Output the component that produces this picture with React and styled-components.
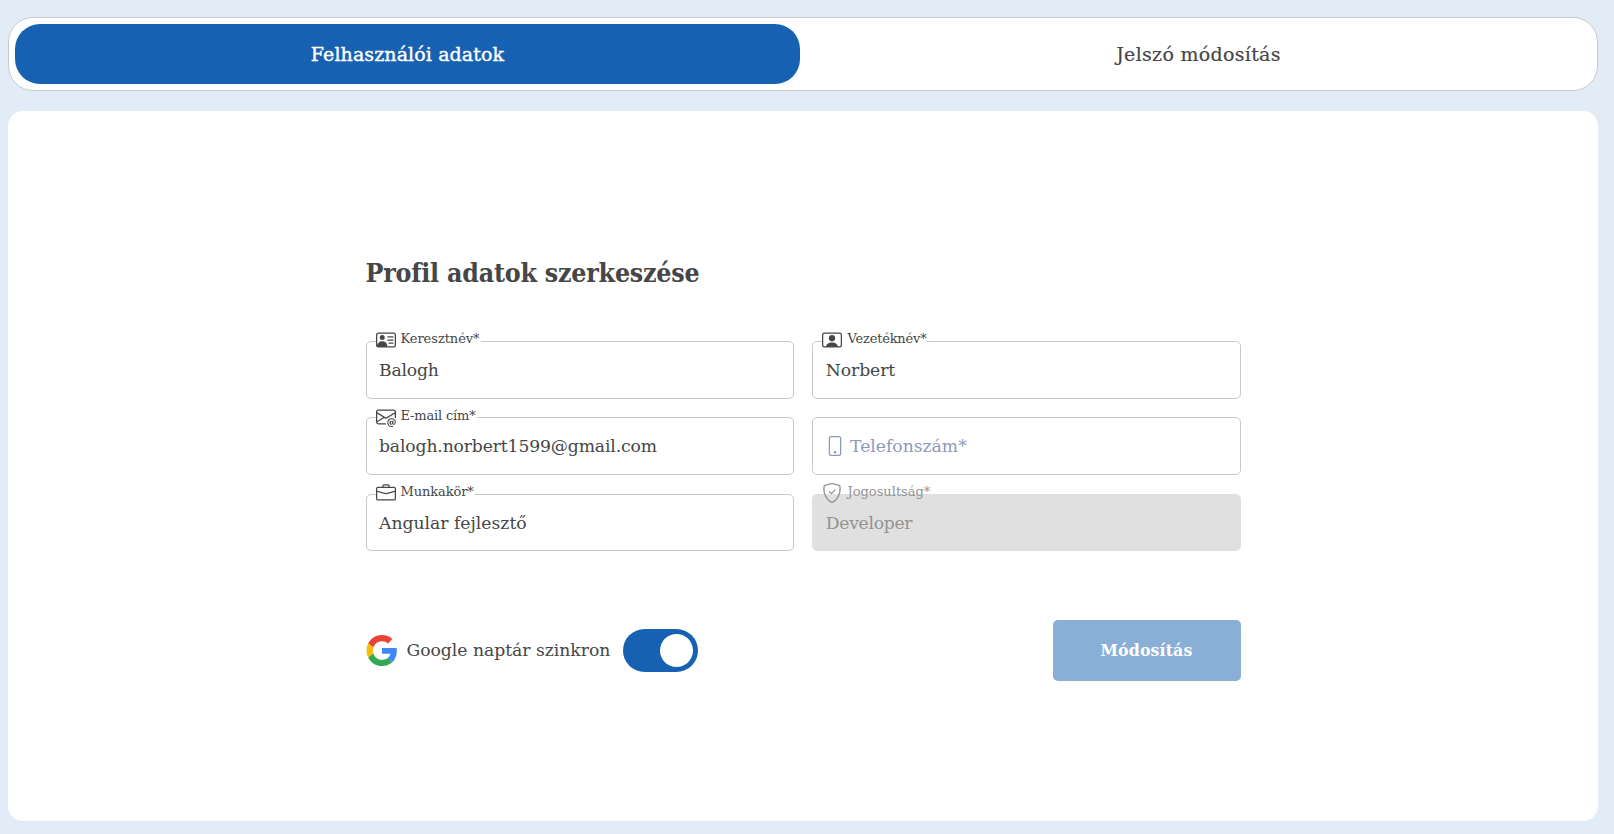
import React from 'react';
import styled, { createGlobalStyle, css } from 'styled-components';
import {
  BsPersonVcard,
  BsPersonVideo,
  BsEnvelopeAt,
  BsBriefcase,
  BsPhone,
  BsShieldCheck,
} from 'react-icons/bs';

const Global = createGlobalStyle`
  * { box-sizing: border-box; }
  body {
    margin: 0;
    background: #e1ecf6;
    color: #464646;
    font-family: "DejaVu Serif", serif;
  }
`;

const Page = styled.main`
  height: 834px;
  padding: 17px 16px 13px 8px;
  display: flex;
  flex-direction: column;
  gap: 20px;
  overflow: hidden;
`;

const Tabs = styled.nav`
  flex: none;
  display: flex;
  gap: 6px;
  height: 74px;
  padding: 6px;
  background: #fff;
  border: 1px solid #c9c9c9;
  border-radius: 25px;
`;

const Tab = styled.button`
  flex: 1;
  border: 0;
  border-radius: 25px;
  padding: 0 0 1px;
  font: 400 19px "DejaVu Serif", serif;
  letter-spacing: ${(p) => p.$spacing}px;
  color: ${(p) => (p.$active ? '#fff' : '#464646')};
  background: ${(p) => (p.$active ? '#1761b2' : 'transparent')};
  -webkit-text-stroke: ${(p) => (p.$active ? 0.4 : 0.2)}px currentColor;
`;

const Panel = styled.section`
  flex: 1;
  display: flex;
  justify-content: center;
  align-items: flex-start;
  background: #fff;
  border-radius: 15px;
  padding-top: 144px;
`;

const Form = styled.form`
  width: 875px;
`;

const Title = styled.h1`
  margin: 0 0 50px;
  font: 700 26.5px/36px "DejaVu Serif Condensed", "DejaVu Serif", serif;
  letter-spacing: -0.22px;
`;

const Fields = styled.div`
  display: grid;
  grid-template-columns: 428px 429px;
  grid-template-rows: 58px 58px 57px;
  column-gap: 18px;
  row-gap: 18.4px;
`;

const Box = styled.div`
  position: relative;
  padding: 18px 12.5px 0 ${(p) => (p.$right ? 13.3 : 12.5)}px;
  border: 1px solid #c9c9c9;
  border-radius: 5px;
  ${(p) =>
    p.$disabled &&
    css`
      color: #929292;
      background: #e0e0e0;
      border-color: #e0e0e0;
    `}
`;

const FloatLabel = styled.label`
  position: absolute;
  top: -11.6px;
  left: 9.5px;
  height: 20px;
  display: flex;
  align-items: center;
  gap: ${(p) => p.$gap}px;
  padding-right: 1px;
  background: ${(p) => (p.$disabled ? 'transparent' : '#fff')};
  svg { width: 20px; height: 20px; }
`;

const LabelText = styled.span`
  margin-top: -2px;
  font-size: 13px;
  line-height: 16px;
  white-space: nowrap;
  letter-spacing: ${(p) => p.$spacing}px;
`;

const Value = styled.div`
  font-size: 17.2px;
  line-height: 20px;
  white-space: nowrap;
  letter-spacing: ${(p) => p.$spacing}px;
`;

const Placeholder = styled(Value)`
  display: flex;
  align-items: center;
  gap: 5px;
  color: #8f99ba;
  svg { width: 20px; height: 20px; }
`;

const Footer = styled.div`
  display: flex;
  align-items: center;
  justify-content: space-between;
  margin-top: 69px;
`;

const Sync = styled.div`
  display: flex;
  align-items: center;
`;

const SyncText = styled.span`
  margin: 0 12px 0 10px;
  width: 204px;
  white-space: nowrap;
  font-size: 17.2px;
  letter-spacing: -0.02px;
`;

const Switch = styled.span`
  display: flex;
  justify-content: flex-end;
  align-items: center;
  width: 75px;
  height: 43px;
  padding: 0 5px;
  border-radius: 22px;
  background: #1761b2;
`;

const Knob = styled.span`
  width: 33px;
  height: 33px;
  border-radius: 50%;
  background: #fff;
`;

const Submit = styled.button`
  width: 188px;
  height: 61px;
  padding: 0 0 1px;
  border: 0;
  border-radius: 5px;
  background: #8aafd7;
  color: #fff;
  font: 700 17.5px "DejaVu Serif Condensed", "DejaVu Serif", serif;
  letter-spacing: 0.15px;
`;

const GoogleLogo = () => (
  <svg width="31" height="31" viewBox="-0.8 0 48 48" aria-hidden="true">
    <path fill="#EA4335" d="M24 9.5c3.54 0 6.71 1.22 9.21 3.6l6.85-6.85C35.9 2.38 30.47 0 24 0 14.62 0 6.51 5.38 2.56 13.22l7.98 6.19C12.43 13.72 17.74 9.5 24 9.5z" />
    <path fill="#4285F4" d="M46.98 24.55c0-1.57-.15-3.09-.38-4.55H24v9.02h12.94c-.58 2.96-2.26 5.48-4.78 7.18l7.73 6c4.51-4.18 7.09-10.36 7.09-17.65z" />
    <path fill="#FBBC05" d="M10.53 28.59A14.5 14.5 0 0 1 9.77 24c0-1.6.27-3.14.76-4.59l-7.98-6.19A23.9 23.9 0 0 0 0 24c0 3.88.92 7.54 2.56 10.78l7.97-6.19z" />
    <path fill="#34A853" d="M24 48c6.48 0 11.93-2.13 15.89-5.81l-7.73-6c-2.15 1.45-4.92 2.3-8.16 2.3-6.26 0-11.57-4.22-13.47-9.91l-7.98 6.19C6.51 42.62 14.62 48 24 48z" />
  </svg>
);

const Field = ({ icon: Icon, label, labelSpacing, gap = 4.5, value, spacing = 0, disabled, right }) => (
  <Box $disabled={disabled} $right={right}>
    <FloatLabel $disabled={disabled} $gap={gap}>
      <Icon />
      <LabelText $spacing={labelSpacing}>{label}</LabelText>
    </FloatLabel>
    <Value $spacing={spacing}>{value}</Value>
  </Box>
);

export default function App() {
  return (
    <>
      <Global />
      <Page>
        <Tabs>
          <Tab $active $spacing={0.1}>Felhasználói adatok</Tab>
          <Tab $spacing={0.3}>Jelszó módosítás</Tab>
        </Tabs>
        <Panel>
          <Form>
            <Title>Profil adatok szerkeszése</Title>
            <Fields>
              <Field icon={BsPersonVcard} label="Keresztnév*" labelSpacing={-0.05} value="Balogh" spacing={-0.2} />
              <Field right icon={BsPersonVideo} label="Vezetéknév*" labelSpacing={-0.2} gap={5.5} value="Norbert" spacing={-0.07} />
              <Field icon={BsEnvelopeAt} label="E-mail cím*" labelSpacing={-0.17} value="balogh.norbert1599@gmail.com" spacing={-0.14} />
              <Box>
                <Placeholder $spacing={0}>
                  <BsPhone />
                  <span>Telefonszám*</span>
                </Placeholder>
              </Box>
              <Field icon={BsBriefcase} label="Munkakör*" labelSpacing={-0.1} value="Angular fejlesztő" />
              <Field right icon={BsShieldCheck} label="Jogosultság*" labelSpacing={0} gap={5.5} value="Developer" spacing={-0.3} disabled />
            </Fields>
            <Footer>
              <Sync>
                <GoogleLogo />
                <SyncText>Google naptár szinkron</SyncText>
                <Switch><Knob /></Switch>
              </Sync>
              <Submit type="button">Módosítás</Submit>
            </Footer>
          </Form>
        </Panel>
      </Page>
    </>
  );
}
